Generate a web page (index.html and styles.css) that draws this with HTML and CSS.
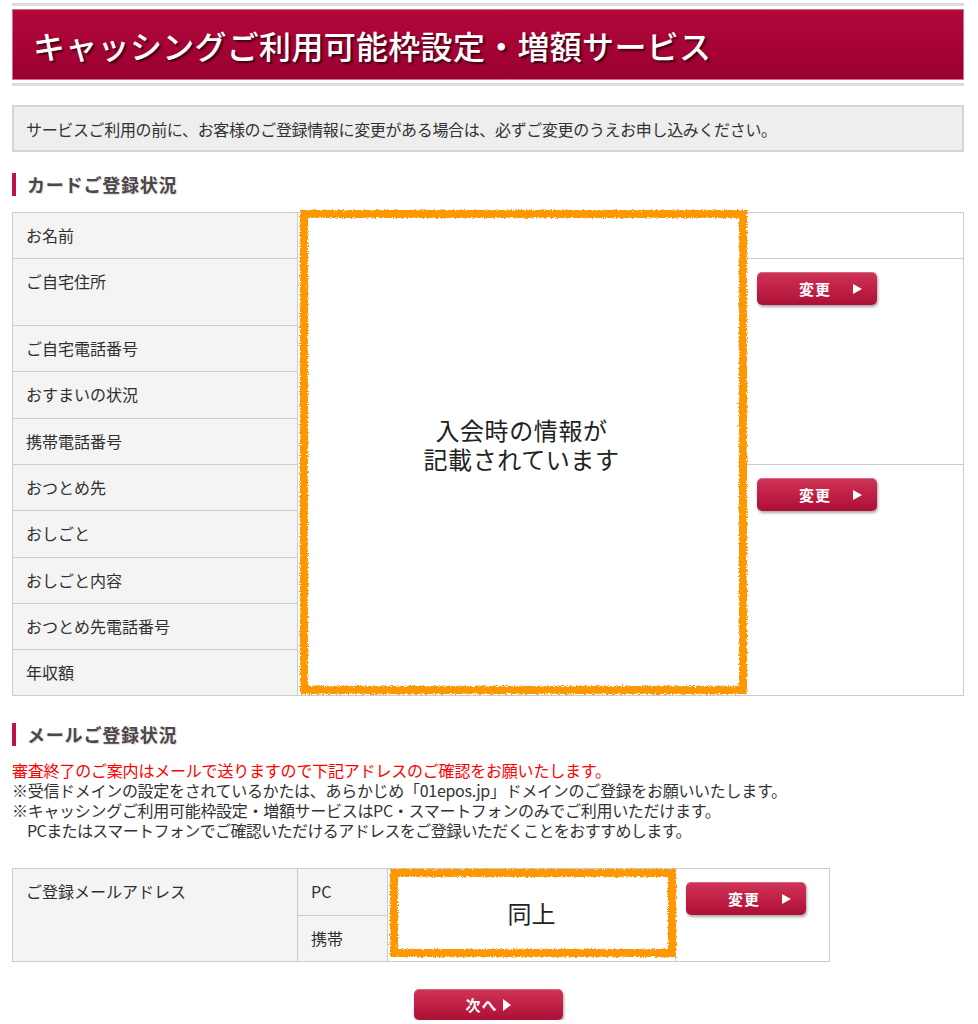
FILE: index.html
```html
<!DOCTYPE html>
<html lang="ja">
<head>
<meta charset="utf-8">
<title>キャッシングご利用可能枠設定・増額サービス</title>
<link rel="stylesheet" href="styles.css">
</head>
<body>
<svg class="svgdefs" width="0" height="0" aria-hidden="true">
  <filter id="rough" x="-5%" y="-5%" width="110%" height="110%">
    <feTurbulence type="fractalNoise" baseFrequency="0.9" numOctaves="2" seed="3" result="noise"/>
    <feDisplacementMap in="SourceGraphic" in2="noise" scale="5" xChannelSelector="R" yChannelSelector="G"/>
  </filter>
</svg>
<div class="page">
  <div class="rule"></div>
  <div class="banner"><h1>キャッシングご利用可能枠設定・増額サービス</h1></div>
  <div class="rule"></div>

  <div class="notice">サービスご利用の前に、お客様のご登録情報に変更がある場合は、必ずご変更のうえお申し込みください。</div>

  <h2 class="section">カードご登録状況</h2>

  <div class="card-grid">
    <div class="lbl">お名前</div>
    <div class="info-cell"><p>入会時の情報が<br>記載されています</p></div>
    <div class="act r1"></div>
    <div class="lbl">ご自宅住所</div>
    <div class="act r2"><a class="btn" href="#"><span class="btn-text">変更</span><span class="arrow"></span></a></div>
    <div class="lbl">ご自宅電話番号</div>
    <div class="lbl">おすまいの状況</div>
    <div class="lbl">携帯電話番号</div>
    <div class="lbl">おつとめ先</div>
    <div class="act r3"><a class="btn" href="#"><span class="btn-text">変更</span><span class="arrow"></span></a></div>
    <div class="lbl">おしごと</div>
    <div class="lbl">おしごと内容</div>
    <div class="lbl">おつとめ先電話番号</div>
    <div class="lbl">年収額</div>
    <div class="scribble scribble-card"></div>
  </div>

  <h2 class="section section-mail">メールご登録状況</h2>

  <div class="notes">
    <p class="red">審査終了のご案内はメールで送りますので下記アドレスのご確認をお願いたします。</p>
    <p>※受信ドメインの設定をされているかたは、あらかじめ「01epos.jp」ドメインのご登録をお願いいたします。</p>
    <p>※キャッシングご利用可能枠設定・増額サービスはPC・スマートフォンのみでご利用いただけます。</p>
    <p class="indent">PCまたはスマートフォンでご確認いただけるアドレスをご登録いただくことをおすすめします。</p>
  </div>

  <div class="mail-grid">
    <div class="lbl m-label">ご登録メールアドレス</div>
    <div class="lbl m-pc">PC</div>
    <div class="m-value">同上</div>
    <div class="act m-act"><a class="btn" href="#"><span class="btn-text">変更</span><span class="arrow"></span></a></div>
    <div class="lbl m-mobile">携帯</div>
    <div class="scribble scribble-mail"></div>
  </div>

  <div class="next-wrap">
    <a class="btn btn-next" href="#"><span class="btn-text">次へ</span><span class="arrow"></span></a>
  </div>
</div>
</body>
</html>
```

FILE: styles.css
```css
* { box-sizing: border-box; }

body {
  margin: 0;
  background: #fff;
  color: #333;
  font-family: "Noto Sans CJK JP", "Noto Sans", sans-serif;
}

.svgdefs {
  position: absolute;
  width: 0;
  height: 0;
  overflow: hidden;
}

.page {
  width: 952px;
  margin: 0 12px;
  padding-top: 3px;
}

.rule {
  height: 3px;
  background: #dcdcdc;
}

.banner {
  margin: 3px 0;
  height: 71px;
  border: 1px solid #d86a86;
  background: linear-gradient(#b2083a, #9a0030);
  display: flex;
  align-items: center;
  padding-left: 20px;
}

.banner h1 {
  margin: 0;
  color: #fff;
  font-size: 32px;
  font-weight: 500;
  letter-spacing: 0.3px;
  text-shadow: 2px 2px 2px rgba(0, 0, 0, 0.6);
}

.notice {
  margin-top: 19px;
  height: 47px;
  border: 2px solid #d4d4d4;
  background: #eeeeee;
  display: flex;
  align-items: center;
  padding-left: 12px;
  font-size: 16px;
  letter-spacing: -0.35px;
  color: #333;
}

.section {
  margin: 21px 0 0;
  height: 23px;
  border-left: 4px solid #c0134a;
  padding-left: 11px;
  font-size: 18px;
  line-height: 23px;
  font-weight: bold;
  color: #4e4649;
  letter-spacing: 0.8px;
  text-shadow: 1px 1px 1px rgba(0, 0, 0, 0.15);
}

.section-mail {
  margin-top: 27px;
}

/* card table */
.card-grid {
  position: relative;
  margin-top: 16px;
  display: grid;
  grid-template-columns: 285px 448px 1fr;
  grid-template-rows: 46px 67px 46px 47px 46px 46px 47px 46px 46px 46px;
  border-top: 1px solid #cccccc;
  border-left: 1px solid #cccccc;
}

.card-grid > div:not(.scribble),
.mail-grid > div:not(.scribble) {
  border-right: 1px solid #cccccc;
  border-bottom: 1px solid #cccccc;
}

.lbl {
  grid-column: 1;
  background: #f4f4f4;
  padding: 11px 13px;
  font-size: 16px;
  line-height: 22px;
  color: #2f2f2f;
}

.info-cell {
  grid-column: 2;
  grid-row: 1 / span 10;
  background: #fff;
  display: flex;
  align-items: center;
  justify-content: center;
  padding-bottom: 20px;
}

.info-cell p {
  margin: 0;
  text-align: center;
  font-size: 24px;
  line-height: 29px;
  letter-spacing: 0.6px;
  color: #222;
}

.act {
  grid-column: 3;
  background: #fff;
  padding: 13px 11px 0;
}

.r1 { grid-row: 1; }
.r2 { grid-row: 2 / span 4; }
.r3 { grid-row: 6 / span 5; }

/* buttons */
.btn {
  display: flex;
  align-items: center;
  width: 120px;
  height: 33px;
  padding: 0 15px 0 42px;
  border-radius: 5px;
  background: linear-gradient(#cd3557 0%, #c12045 50%, #ab1036 100%);
  box-shadow: 1px 2px 3px rgba(0, 0, 0, 0.35), inset 0 1px 0 rgba(255, 255, 255, 0.25);
  color: #fff;
  text-decoration: none;
  font-size: 15px;
  font-weight: bold;
}

.btn-text {
  letter-spacing: 1px;
}

.arrow {
  margin-left: auto;
  width: 0;
  height: 0;
  border-top: 5px solid transparent;
  border-bottom: 5px solid transparent;
  border-left: 9px solid #fff;
}

.next-wrap {
  margin-top: 27px;
  display: flex;
  justify-content: center;
}

.btn-next {
  width: 149px;
  height: 31px;
  padding: 0;
  justify-content: center;
  gap: 5px;
}

.btn-next .arrow {
  margin-left: 0;
  border-top-width: 6px;
  border-bottom-width: 6px;
  border-left-width: 8px;
}

/* notes */
.notes {
  margin-top: 14px;
  font-size: 16px;
  line-height: 20px;
  letter-spacing: -0.3px;
  color: #333;
}

.notes p {
  margin: 0;
}

.notes .red {
  color: #ff0000;
  letter-spacing: -0.2px;
}

.notes .indent {
  padding-left: 15px;
  letter-spacing: -0.6px;
}

/* mail table */
.mail-grid {
  position: relative;
  margin-top: 28px;
  width: 818px;
  display: grid;
  grid-template-columns: 285px 90px 288px 1fr;
  grid-template-rows: 47px 46px;
  border-top: 1px solid #cccccc;
  border-left: 1px solid #cccccc;
}

.m-label {
  grid-column: 1;
  grid-row: 1 / span 2;
}

.m-pc {
  grid-column: 2;
  grid-row: 1;
}

.m-mobile {
  grid-column: 2;
  grid-row: 2;
}

.m-value {
  grid-column: 3;
  grid-row: 1 / span 2;
  background: #fff;
  display: flex;
  align-items: center;
  justify-content: center;
  font-size: 24px;
  color: #222;
  padding-bottom: 6px;
}

.m-act {
  grid-column: 4;
  grid-row: 1 / span 2;
  padding: 13px 10px 0;
}

/* orange hand-drawn annotation frames */
.scribble {
  position: absolute;
  border: 8px solid #ff9800;
  filter: url(#rough);
  pointer-events: none;
}

.scribble-card {
  left: 287px;
  top: -3px;
  width: 447px;
  height: 484px;
}

.scribble-mail {
  left: 377px;
  top: 0;
  width: 286px;
  height: 88px;
}
```
